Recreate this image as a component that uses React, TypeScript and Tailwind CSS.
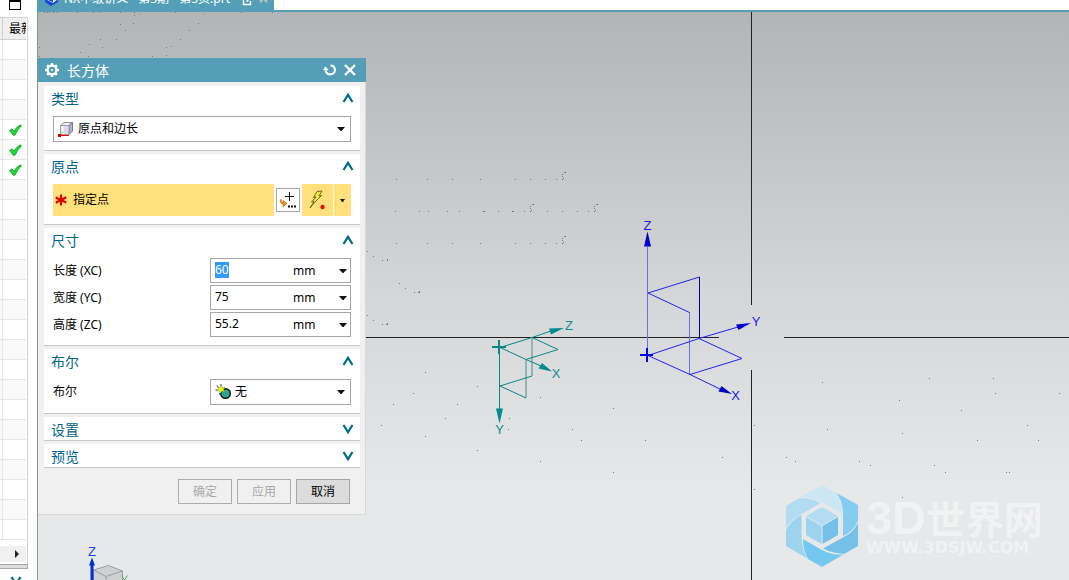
import { useEffect, useRef } from "react";
import type { ReactNode } from "react";

const ROW_COUNT = 25;
const CHECKED_ROWS = [4, 5, 6];

const DOTS: [number, number][] = [
  [44, 12], [47, 12], [49, 12], [53, 12], [57, 12], [77, 12], [93, 12], [100, 12], [120, 12], [134, 12], [175, 12],
  [241, 12], [272, 12], [134, 15], [139, 14], [120, 24], [133, 23], [203, 14], [198, 23], [125, 30], [189, 30],
  [100, 39], [116, 39], [180, 39], [89, 44], [102, 47], [166, 47], [171, 46], [80, 52], [88, 56], [152, 56],
  [166, 55], [39, 47], [39, 56],
  [395, 211], [419, 211], [428, 211], [447, 211], [459, 211], [483, 211], [484, 211], [498, 211], [512, 211],
  [513, 211], [524, 211], [547, 211], [562, 211], [577, 211], [588, 211],
  [367, 251], [373, 256], [382, 260], [387, 260], [387, 259], [399, 283], [405, 288], [414, 292], [418, 292],
  [419, 292], [419, 291], [367, 315], [373, 320], [382, 324], [386, 324], [387, 324], [387, 323],
  [425, 372], [477, 386], [413, 393], [540, 397], [393, 404], [457, 404], [445, 418], [509, 418], [613, 408],
  [381, 425], [508, 429], [572, 429], [425, 436], [581, 440], [645, 440], [477, 450], [540, 461], [722, 457],
  [613, 472], [754, 425], [754, 489], [786, 457], [795, 461], [827, 429], [902, 433], [822, 382], [929, 378],
  [899, 400], [961, 410], [993, 378], [995, 393], [1059, 393], [1027, 425], [977, 440], [1038, 440], [859, 461],
  [870, 465], [934, 465], [945, 472], [1006, 472], [1009, 472], [902, 497], [827, 493], [977, 504], [1038, 504],
];

const ROW_DOTS = [396, 427, 452, 480, 515, 530, 545, 556];
const HOOKS: [number, number][] = [[562, 179], [530, 211], [594, 211], [562, 243]];

function Chevron({ open }: { open: boolean }) {
  return (
    <svg width="12" height="10" viewBox="0 0 12 10" fill="none" stroke="#006a8e" strokeWidth="2.2" aria-hidden="true">
      <path d={open ? "M1.5 9 L6 1.8 L10.5 9" : "M1.5 1 L6 8.2 L10.5 1"} />
    </svg>
  );
}

function Arrow() {
  return (
    <svg width="8" height="4" viewBox="0 0 8 4" fill="#111" aria-hidden="true">
      <path d="M0 0H8L4.5 4H3.5Z" />
    </svg>
  );
}

function Section({ title, open = true, children }: { title: string; open?: boolean; children?: ReactNode }) {
  return (
    <section className="border-b border-[#c8c8c8] bg-white">
      <button
        type="button"
        aria-expanded={open}
        className="flex h-[23px] w-full items-center justify-between pr-1.5 pl-[7px] text-sm leading-5 text-[#00658a]"
      >
        <span className="pt-0.5">{title}</span>
        <Chevron open={open} />
      </button>
      {open && <div className="pt-[7px] pr-[9px] pb-2 pl-[9px]">{children}</div>}
    </section>
  );
}

function PickList({ label, id, value, icon }: { label?: string; id: string; value: string; icon: ReactNode }) {
  return (
    <div className="relative flex h-[26px] flex-1 items-center border border-[#a6a6a6] bg-white pl-1">
      {icon}
      <select
        id={id}
        aria-label={label}
        defaultValue={value}
        className="h-full min-w-0 flex-1 appearance-none bg-transparent pr-5 pl-[3px] text-xs text-black outline-none"
      >
        <option>{value}</option>
      </select>
      <span className="pointer-events-none absolute top-0 right-[5px] flex h-full items-center">
        <Arrow />
      </span>
    </div>
  );
}

function SizeField({ label, id, value, selected }: { label: string; id: string; value: string; selected?: boolean }) {
  const ref = useRef<HTMLInputElement>(null);
  useEffect(() => {
    if (selected && ref.current) {
      ref.current.focus();
      ref.current.select();
    }
  }, [selected]);
  return (
    <div className="flex items-center justify-between">
      <label htmlFor={id}>{label}</label>
      <div className="flex h-[25px] w-[141px] items-center border border-[#a6a6a6] bg-white pr-[3px] pl-1">
        <input
          ref={ref}
          id={id}
          defaultValue={value}
          className="mb-0.5 w-[78px] min-w-0 bg-transparent text-xs leading-4 text-black outline-none selection:bg-[#3399ff] selection:text-white"
        />
        <span className="flex-1">mm</span>
        <button type="button" aria-label={label + " 选项"} className="flex h-full items-center">
          <Arrow />
        </button>
      </div>
    </div>
  );
}

function BlockIcon() {
  return (
    <svg width="17" height="18" viewBox="0 0 17 18" aria-hidden="true">
      <path d="M2.5 5.5L6 2.5H14.5L11 5.5Z" fill="#f4f2fa" stroke="#8a8a90" />
      <path d="M11 5.5L14.5 2.5V11L11 14.5Z" fill="#b9aedb" stroke="#77777c" />
      <path d="M2.5 5.5H11V14.5H2.5Z" fill="#ddd6ee" stroke="#9a9aa4" />
      <path d="M4.5 6.5V14" stroke="#fff" strokeWidth="2" />
      <path d="M2 14.5L5 11.5" stroke="#5bd45b" />
      <path d="M1.5 15.5H11" stroke="#e01010" />
      <rect x="0" y="14" width="3" height="3" fill="#e00000" />
    </svg>
  );
}

function NoneIcon() {
  return (
    <svg width="17" height="16" viewBox="0 0 17 16" aria-hidden="true">
      <circle cx="10.5" cy="9.5" r="4.8" fill="#2aa394" stroke="#111" strokeWidth="1.4" />
      <path d="M6.4 1L7 3.8L10 3.2L8.4 5.4L9.6 7.8L7 7L5.2 9.4L4.6 6.8L1.5 7L3.8 5L2.4 2.6L5 3.6Z" fill="#f4ef1c" stroke="#8a9a20" strokeWidth="0.5" />
      <path d="M1.5 1.5L3.5 3M6 0V2M0.5 6H2.5M4.5 9V10.5" stroke="#1d6a86" />
    </svg>
  );
}

function Watermark() {
  return (
    <div className="absolute right-[26px] bottom-[13px] flex items-center gap-2 text-[#f1f2f4]">
      <svg width="72" height="82" viewBox="0 0 72 82" aria-hidden="true">
        <path fill="#cde6f4" d="M14 12.5L36 0L49 7.5Q56 16 56 29L36 17Q28 12 14 12.5Z" />
        <path fill="#84cdf0" d="M50.5 8L72 20V36Q67 47 57 51V29Q57 17 50.5 8Z" />
        <path fill="#74c0e8" d="M72 38V61L58 69Q46 68 37 63.5L56 53Q67 48 72 38Z" />
        <path fill="#74c8f0" d="M57 69.8L36 82L22 74Q17 65 17 54L35 64.5Q45 70 57 69.8Z" />
        <path fill="#9cd3ef" d="M21 73.3L0 61V45Q5 35 15.5 30V53Q16 64 21 73.3Z" />
        <path fill="#b3dcf2" d="M0 43V21L13 13.5Q25 12 34.5 18L16 29Q5 34 0 43Z" />
        <path fill="#b3dcf2" d="M36 22L52 31L36 40.5L20 31Z" />
        <path fill="#9cd3ef" d="M20 32L35.5 41V59L20 50Z" />
        <path fill="#74c0e8" d="M36.5 41L52 32V50L36.5 59Z" />
      </svg>
      <div className="flex flex-col">
        <div className="flex h-11 items-center pb-0.5 leading-none font-bold">
          <span className="font-['Liberation_Sans',sans-serif] text-[47px]">3D</span>
          <span className="font-['Noto_Sans_CJK_SC',sans-serif] text-[39px]">世界网</span>
        </div>
        <div className="font-['DejaVu_Sans',sans-serif] text-base leading-4 font-bold">WWW.3DSJW.COM</div>
      </div>
    </div>
  );
}

function Scene() {
  return (
    <svg className="absolute inset-0 h-full w-full" aria-hidden="true">
      <g transform="translate(-38 -12)">
        <g fill="#7a7c80">
          {DOTS.map(([x, y], i) => (
            <rect key={i} x={x} y={y} width="1" height="1" />
          ))}
          {ROW_DOTS.map((x) => (
            <g key={x}>
              <rect x={x} y="179" width="1" height="1" />
              <rect x={x} y="243" width="1" height="1" />
            </g>
          ))}
          {HOOKS.map(([x, y]) => (
            <path
              key={x + "-" + y}
              d={`M${x} ${y}h1v1h-1z M${x + 1} ${y - 1}h1v1h-1z M${x} ${y - 3}h1v1h-1z M${x} ${y - 5}h1v1h-1z M${x + 2} ${y - 7}h2v1h-2z`}
            />
          ))}
        </g>

        <g fill="#222" shapeRendering="crispEdges">
          <rect x="366" y="337" width="353" height="1" />
          <rect x="784" y="337" width="4000" height="1" />
          <rect x="751" y="12" width="1" height="293" />
          <rect x="751" y="370" width="1" height="4000" />
        </g>

        <g fill="none" stroke="#2222f4">
          <path stroke="#6c6cf0" d="M647.5 247V355M689.5 312V375" />
          <path d="M648 293L699.5 277M648 293L689.5 312.5" />
          <path stroke="#0000cc" d="M699.5 277V338" />
          <path d="M648 355.5L699 338.5L742 358.5L690 374.5L648 355.5M699 338.5L738 327M690 374.5L721 389.5" />
          <path stroke="#0000ff" strokeWidth="2" d="M640 355H653M647 348V362" />
        </g>
        <g fill="#0000c8">
          <path d="M647.5 231.5L651 246.5H644Z" />
          <path d="M751 323L738.5 330L736 324.5Z" />
          <path d="M732 394L718.5 391.5L721.5 386Z" />
        </g>

        <g fill="none" stroke="#0c8585">
          <path stroke="#92b4b4" strokeWidth="2" d="M532 337V376M526 359V398" />
          <path d="M499.5 347V409M500 347.5L532 337.5L551 331M500 347.5L526 359.5L541 366M532 337.5L558 349.5L526 359.5M500 386L532 376M500 386L526 398" />
          <path strokeWidth="2" d="M492 347H506M499 340V354" />
        </g>
        <g fill="#008c8c">
          <path d="M499.5 423.5L503 408.5H496Z" />
          <path d="M564 328L551 334.5L549 328.5Z" />
          <path d="M552 371.5L538.5 368.5L542 363Z" />
        </g>

        <g fontSize="13" textAnchor="middle" fontFamily="Liberation Sans, sans-serif">
          <g fill="#1a1af0">
            <text x="647.5" y="230">Z</text>
            <text x="756" y="326">Y</text>
            <text x="735.5" y="400">X</text>
          </g>
          <g fill="#0c8f8f">
            <text x="569" y="330">Z</text>
            <text x="556" y="378">X</text>
            <text x="499.5" y="434">Y</text>
          </g>
          <text x="92" y="556" fill="#2040f0">Z</text>
        </g>

        <g stroke="#9c9d9e">
          <path fill="#cfd0d1" d="M93.5 570L108.5 565.5L122.5 571V590H93.5Z" />
          <path fill="none" d="M93.5 570L106 576.5L122.5 571M106 576.5V590" />
        </g>
        <path fill="none" stroke="#58a060" d="M121.5 575.5L124.5 580L127.5 575.5" />
        <path fill="#0030d0" d="M90.5 564H93.5V590H90.5ZM92 557.5L95 565.5H89Z" />
      </g>
    </svg>
  );
}

function PropertyPane() {
  return (
    <aside className="w-7 shrink-0 overflow-hidden bg-white">
      <div className="flex h-[17px] items-start pl-[9px]">
        <button type="button" aria-label="还原窗口" className="h-2.5 w-3 border border-t-2 border-black" />
      </div>
      <div className="h-[547px] border-t border-r border-[#d2d2d2] pr-px">
        <table className="w-full table-fixed border-separate border-spacing-0 text-xs">
          <thead>
            <tr className="h-[22px] bg-[#f0f0f0]">
              <th className="w-[3px] border-r border-b border-[#cfcfcf] p-0" />
              <th className="border-b border-[#cfcfcf] p-0 pl-1.5 text-left font-normal whitespace-nowrap">
                <div className="h-[21px] overflow-hidden pt-px leading-5">最新</div>
              </th>
            </tr>
          </thead>
          <tbody>
            {Array.from({ length: ROW_COUNT }, (_, i) => (
              <tr key={i} className="h-5 odd:bg-white even:bg-[#f9f9f9]">
                <td className="border-r border-b border-[#e6e6e6] p-0" />
                <td className="border-b border-[#e6e6e6] p-0 pl-1.5">
                  {CHECKED_ROWS.includes(i) && (
                    <svg width="13" height="12" viewBox="0 0 13 12" role="img" aria-label="最新">
                      <path d="M0.6 6.6L2.8 5L5 6.8Q7.5 2.8 11.4 0.8L12.4 2Q8.6 5.2 6 11.2H4.2Z" fill="#1fd838" stroke="#0f9a24" strokeWidth="0.8" />
                    </svg>
                  )}
                </td>
              </tr>
            ))}
          </tbody>
        </table>
        <div className="mt-1.5 flex h-4 items-center justify-center bg-[#f0f0f0] pl-2">
          <svg width="4" height="8" viewBox="0 0 4 8" aria-hidden="true">
            <path d="M0 0L4 4L0 8Z" fill="#222" />
          </svg>
        </div>
      </div>
      <div className="h-[5px] border border-l-0 border-[#a8a8a8] bg-[#dcdcdc]" />
      <div className="mt-[7px] pl-2.5">
        <Chevron open={false} />
      </div>
    </aside>
  );
}

function BlockDialog() {
  return (
    <div
      role="dialog"
      aria-labelledby="dialog-title"
      className="absolute top-[46px] left-0 w-[328px] border-r border-b border-[#d6d8da] bg-[#f0f0f0] text-xs text-black"
    >
      <header className="-mr-px flex h-6 items-center bg-[#549fb7] pr-2.5 pl-[7px] text-white">
        <svg width="14" height="14" viewBox="0 0 14 14" fill="none" stroke="currentColor" aria-hidden="true">
          <circle cx="7" cy="7" r="4.4" strokeWidth="2.2" />
          <circle cx="7" cy="7" r="1" fill="currentColor" stroke="none" />
          <path strokeWidth="2.6" d="M7 0V2.6M7 11.4V14M0 7H2.6M11.4 7H14M2.1 2.1L3.8 3.8M10.2 10.2L11.9 11.9M2.1 11.9L3.8 10.2M10.2 3.8L11.9 2.1" />
        </svg>
        <h1 id="dialog-title" className="ml-2 flex-1 pt-0.5 text-sm leading-5">
          长方体
        </h1>
        <button type="button" aria-label="重置">
          <svg width="14" height="14" viewBox="0 0 14 14" fill="none" stroke="currentColor" strokeWidth="2" aria-hidden="true">
            <path d="M7.5 2.2Q12 2.8 12 7.2A4.8 4.8 0 0 1 2.8 8.4V5" />
            <path d="M0 7L2.4 3.2L5.6 7Z" fill="currentColor" stroke="none" />
          </svg>
        </button>
        <button type="button" aria-label="关闭" className="ml-[7px]">
          <svg width="12" height="12" viewBox="0 0 12 12" fill="none" stroke="currentColor" strokeWidth="2.4" aria-hidden="true">
            <path d="M1 1L11 11M11 1L1 11" />
          </svg>
        </button>
      </header>

      <div className="flex flex-col gap-[3px] pt-1 pr-[5px] pl-1.5">
        <Section title="类型">
          <div className="flex">
            <PickList label="类型" id="block-type" value="原点和边长" icon={<BlockIcon />} />
          </div>
        </Section>

        <Section title="原点">
          <div className="flex items-center gap-0.5">
            <div className="flex h-8 flex-1 items-center gap-1.5 bg-[#ffe07b] pl-0.5">
              <svg width="12" height="12" viewBox="0 0 12 12" stroke="#e00000" strokeWidth="2.2" aria-hidden="true">
                <path d="M6 0.5V11.5M0.8 3.4L11.2 8.6M0.8 8.8L11.2 3.2" />
              </svg>
              <span>指定点</span>
            </div>
            <button
              type="button"
              aria-label="点对话框"
              className="flex h-6 w-6 items-center justify-center border border-[#a6a6a6] bg-white"
            >
              <svg width="18" height="18" viewBox="0 0 18 18" fill="none" aria-hidden="true">
                <path d="M10.5 1V10M6 5.5H15" stroke="#111" />
                <path d="M1.8 8.2Q1.6 12.2 4.5 12.4" stroke="#e8841c" strokeWidth="2" />
                <path d="M4 9.4L7.8 12.5L4 15.8Z" fill="#f09020" stroke="#b85a18" strokeWidth="0.6" />
                <path d="M9 15.5H11M12 15.5H14M15 15.5H17" stroke="#111" strokeWidth="2" />
              </svg>
            </button>
            <div className="flex h-8 bg-[#ffe07b]">
              <button type="button" aria-label="自动判断的点" className="flex w-8 items-center justify-center border-r border-white pr-0.5">
                <svg width="18" height="20" viewBox="0 0 18 20" aria-hidden="true">
                  <path d="M9 1.5L14 1L11 6L13.5 5.5L7 12L2 18L6 11.5L3.5 12L8 7L5.5 7.5Z" fill="#f2e63c" stroke="#5c5a30" strokeWidth="0.9" />
                  <circle cx="14.5" cy="17" r="2.2" fill="#e01010" />
                </svg>
              </button>
              <button type="button" aria-label="点类型列表" className="flex w-[17px] items-center justify-center">
                <svg width="5" height="3" viewBox="0 0 5 3" fill="#111" aria-hidden="true">
                  <path d="M0 0H5L3 3H2Z" />
                </svg>
              </button>
            </div>
          </div>
        </Section>

        <Section title="尺寸">
          <div className="flex flex-col gap-0.5">
            <SizeField label="长度 (XC)" id="size-x" value="60" selected />
            <SizeField label="宽度 (YC)" id="size-y" value="75" />
            <SizeField label="高度 (ZC)" id="size-z" value="55.2" />
          </div>
        </Section>

        <Section title="布尔">
          <div className="flex items-center">
            <label htmlFor="boolean-op" className="flex-1">
              布尔
            </label>
            <div className="flex w-[141px]">
              <PickList id="boolean-op" value="无" icon={<NoneIcon />} />
            </div>
          </div>
        </Section>

        <Section title="设置" open={false} />
        <Section title="预览" open={false} />
      </div>

      <footer className="flex justify-end gap-[5px] pt-[11px] pr-[15px] pb-2.5">
        <button type="button" disabled className="h-[25px] w-[54px] border border-[#adadad] text-[#a8a8a8]">
          确定
        </button>
        <button type="button" disabled className="h-[25px] w-[54px] border border-[#adadad] text-[#a8a8a8]">
          应用
        </button>
        <button type="button" className="h-[25px] w-[54px] border border-[#a6a6a6] bg-[#dcdcdc]">
          取消
        </button>
      </footer>
    </div>
  );
}

export default function App() {
  return (
    <div className="flex h-screen overflow-hidden bg-white font-['Noto_Sans','Noto_Sans_CJK_SC',sans-serif]">
      <PropertyPane />
      <main className="ml-[9px] flex min-w-0 flex-1 flex-col">
        <div className="-mt-3.5 flex border-b-2 border-[#549fb7]">
          <div className="flex h-6 items-center bg-[#549fb7] pr-1.5 pl-[7px] text-white">
            <svg width="15" height="16" viewBox="0 0 15 16" aria-hidden="true">
              <path d="M7 1L14 4V12L7 16L1 12V4Z" fill="#1646d8" />
              <path d="M3 6L9 8L13 6V10L9 13L3 10Z" fill="#dbe8ff" />
              <path d="M5 8L9 9.5V12L5 10.5Z" fill="#1646d8" />
            </svg>
            <span className="ml-[5px] pt-0.5 text-xs whitespace-nowrap">NX中级讲义 - 第3期 - 第5页.prt</span>
            <svg className="mt-1 ml-3" width="10" height="12" viewBox="0 0 10 12" fill="none" stroke="currentColor" aria-hidden="true">
              <path strokeWidth="1.4" d="M4 1.5H1.5V10.5H8.5V7M4 5.5H7.5M5.5 3V8" />
            </svg>
            <button type="button" aria-label="关闭标签" className="ml-[7px] text-[#c4c4c4]">
              <svg width="9" height="9" viewBox="0 0 9 9" stroke="currentColor" strokeWidth="2" aria-hidden="true">
                <path d="M1 1L8 8M8 1L1 8" />
              </svg>
            </button>
          </div>
        </div>
        <div className="relative flex-1 overflow-hidden border-l border-[#8a9194] bg-linear-to-b from-[#b3b4b6] via-[#d5d6d8] via-50% to-[#e6e8e9] to-85%">
          <Scene />
          <Watermark />
          <BlockDialog />
        </div>
      </main>
    </div>
  );
}
